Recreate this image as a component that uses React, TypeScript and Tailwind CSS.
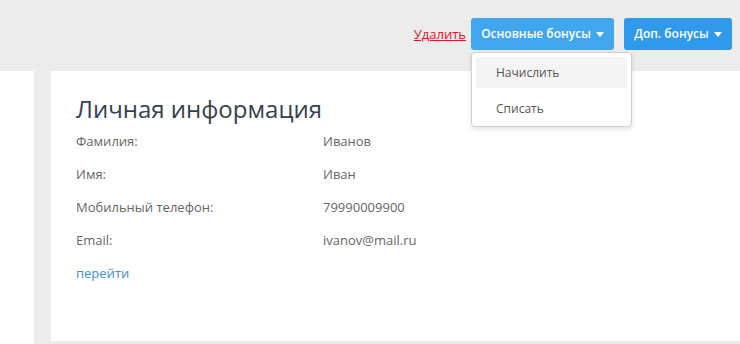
import { useState } from 'react'

const rows = [
  { label: 'Фамилия:', value: 'Иванов' },
  { label: 'Имя:', value: 'Иван' },
  { label: 'Мобильный телефон:', value: '79990009900' },
  { label: 'Email:', value: 'ivanov@mail.ru' },
]

function Caret() {
  return (
    <svg width="8" height="5" viewBox="0 0 8 5" className="ml-[5px] inline-block">
      <path d="M0 0h8L4 5z" fill="currentColor" />
    </svg>
  )
}

export default function App() {
  const [open] = useState(true)

  return (
    <div className="w-[740px] h-[344px] overflow-hidden bg-white text-[13px] font-['Open_Sans',sans-serif]">
      {/* top bar */}
      <div className="h-[71px] bg-[#ececec] flex items-start justify-end pt-[18px] pr-[8px]">
        <a href="#" className="mt-[7px] mr-[5px] text-[#e0141e] underline text-[13px]">
          Удалить
        </a>
        <div className="relative">
          <button className="h-[32px] w-[143px] rounded-[3px] bg-[#42a6ef] text-white text-[12px] font-semibold flex items-center justify-center">
            Основные бонусы
            <Caret />
          </button>
          {open && (
            <div className="absolute left-0 top-[34px] w-[161px] rounded-[4px] border border-[#cfcfcf] bg-white shadow-[0_2px_5px_rgba(0,0,0,0.12)] px-[4px] pt-[4px] z-10 text-[12px]">
              <div className="h-[31px] rounded-[3px] bg-[#f4f4f4] pl-[20px] flex items-center text-[#555]">
                Начислить
              </div>
              <div className="mt-[4px] h-[34px] pl-[20px] flex items-center text-[#555]">Списать</div>
            </div>
          )}
        </div>
        <button className="ml-[10px] h-[32px] w-[108px] rounded-[3px] bg-[#2f99ec] text-white text-[12px] font-semibold flex items-center justify-center">
          Доп. бонусы
          <Caret />
        </button>
      </div>

      {/* content */}
      <div className="flex h-[273px]">
        <div className="w-[34px] shrink-0" />
        <div className="flex-1 bg-[#ececec] pl-[17px] pb-[3px]">
          <div className="h-full bg-white pl-[25px] pt-[24px]">
            <h2 className="text-[24px] leading-[28px] text-[#34414f] mb-[2px]">Личная информация</h2>
            {rows.map((r) => (
              <div key={r.label} className="flex h-[33px] items-center text-[#666]">
                <div className="w-[247px]">{r.label}</div>
                <div>{r.value}</div>
              </div>
            ))}
            <a href="#" className="flex h-[33px] items-center text-[#3a8fd4]">
              перейти
            </a>
          </div>
        </div>
      </div>
    </div>
  )
}
